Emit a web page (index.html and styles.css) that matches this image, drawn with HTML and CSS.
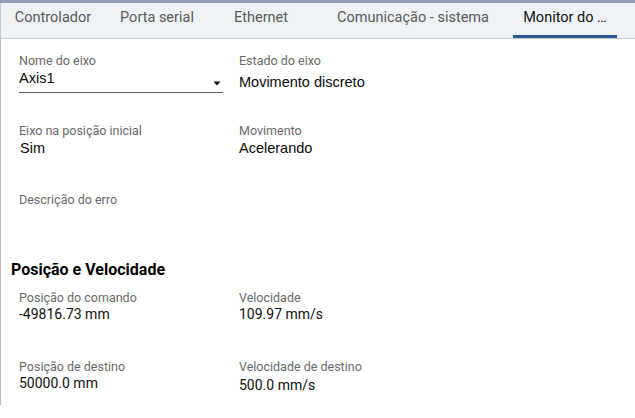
FILE: index.html
```html
<!DOCTYPE html>
<html lang="pt">
<head>
<meta charset="utf-8">
<title>Monitor do eixo</title>
<link rel="stylesheet" href="styles.css">
</head>
<body>
<div class="app">
  <div class="topbar"></div>
  <nav class="tabs">
    <div class="tab">Controlador</div>
    <div class="tab">Porta serial</div>
    <div class="tab">Ethernet</div>
    <div class="tab tab-wide">Comunicação - sistema</div>
    <div class="tab active">Monitor do …</div>
  </nav>
  <main class="panel">
    <section class="grid">
      <div class="field">
        <div class="label">Nome do eixo</div>
        <div class="select">
          <span class="value">Axis1</span>
          <svg class="caret" width="8" height="5" viewBox="0 0 8 5"><path d="M0.5 0.5h7L4 4.5z" fill="#111"/></svg>
        </div>
      </div>
      <div class="field">
        <div class="label">Estado do eixo</div>
        <div class="value value-low">Movimento discreto</div>
      </div>
      <div class="field">
        <div class="label">Eixo na posição inicial</div>
        <div class="value value-indent">Sim</div>
      </div>
      <div class="field">
        <div class="label">Movimento</div>
        <div class="value">Acelerando</div>
      </div>
      <div class="field">
        <div class="label">Descrição do erro</div>
        <div class="value"></div>
      </div>
      <div class="field"></div>
    </section>
    <h2 class="heading">Posição e Velocidade</h2>
    <section class="grid grid-small">
      <div class="field">
        <div class="label">Posição do comando</div>
        <div class="num">-49816.73 mm</div>
      </div>
      <div class="field">
        <div class="label">Velocidade</div>
        <div class="num">109.97 mm/s</div>
      </div>
      <div class="field">
        <div class="label">Posição de destino</div>
        <div class="num">50000.0 mm</div>
      </div>
      <div class="field">
        <div class="label">Velocidade de destino</div>
        <div class="num num-low">500.0 mm/s</div>
      </div>
    </section>
  </main>
</div>
</body>
</html>
```

FILE: styles.css
```css
* { box-sizing: border-box; }
html, body { margin: 0; padding: 0; background: #ffffff; }
body { font-family: Roboto, "Liberation Sans", Arial, sans-serif; color: #111; }

.app { width: 635px; }

.topbar { height: 3px; background: #8e9fb3; }

.tabs {
  display: flex;
  height: 36px;
  background: #eef2f5;
  border-bottom: 1px solid #c6c8ca;
  border-left: 1px solid #c9ccd0;
}
.tab {
  width: 104px;
  height: 35px;
  padding-top: 5px;
  font-size: 14.5px;
  line-height: 20px;
  color: #5a5a5a;
  text-align: center;
  white-space: nowrap;
  border-bottom: 3px solid transparent;
}
.tab-wide { width: 200px; }
.tab.active { color: #111; border-bottom-color: #2b5896; }

.panel {
  height: 366px;
  border-left: 1px solid #bdbdbd;
  padding: 14px 0 0 18px;
}

.grid {
  display: grid;
  grid-template-columns: 220px 1fr;
  grid-auto-rows: 69.5px;
}
.grid-small { grid-auto-rows: 69px; }

.label {
  font-size: 12.5px;
  line-height: 16px;
  color: #6a6a6a;
}
.value {
  font-family: "Liberation Sans", Arial, sans-serif;
  font-size: 14.5px;
  line-height: 18px;
  color: #0a0a0a;
  min-height: 18px;
}
.value-low { margin-top: 4px; }
.value-indent { padding-left: 1px; }

.select {
  width: 204px;
  display: flex;
  align-items: center;
  justify-content: space-between;
  padding-bottom: 5px;
  border-bottom: 1px solid #5e5e5e;
}
.caret { margin-right: 2px; margin-top: 10px; }

.heading {
  margin: -2px 0 10px -8px;
  font-size: 16px;
  line-height: 20px;
  font-weight: 700;
  color: #000;
}

.num {
  font-size: 14px;
  line-height: 18px;
  margin-top: -1px;
  color: #111;
}
.num-low { margin-top: 1px; }
```
